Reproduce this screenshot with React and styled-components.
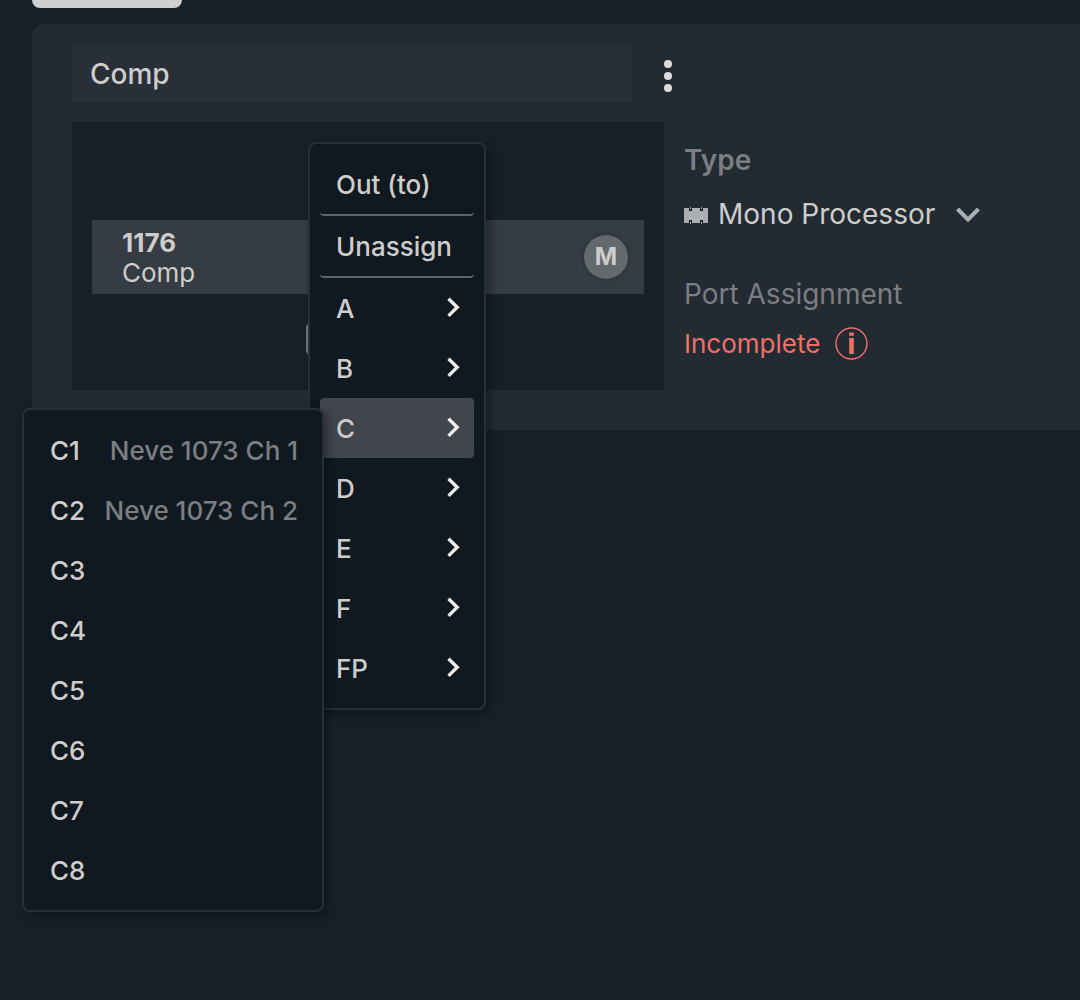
import React, { useState } from 'react';
import styled, { createGlobalStyle, css } from 'styled-components';

const GlobalStyle = createGlobalStyle`
  * {
    box-sizing: border-box;
  }

  body {
    margin: 0;
    background: #182027;
    color: #cecdcc;
    font-family: Inter, "Liberation Sans", sans-serif;
    font-size: 26px;
    line-height: 30px;
  }

  button, input, select {
    margin: 0;
    border: 0;
    color: inherit;
    font: inherit;
  }
`;

const Page = styled.main`
  min-height: 100vh;
  padding-left: 32px;
`;

const Tab = styled.button`
  display: block;
  width: 150px;
  height: 8px;
  padding: 0;
  background: #cfcfcf;
  border-radius: 0 0 8px 8px;
`;

const Panel = styled.section`
  margin-top: 16px;
  padding: 20px 40px 40px;
  background: #232b32;
  border-radius: 12px 0 0 0;
`;

const Header = styled.header`
  display: flex;
  align-items: center;
  gap: 18px;
  margin-bottom: 20px;
`;

const NameInput = styled.input`
  width: 560px;
  height: 58px;
  padding: 2px 18px 0;
  background: #292f37;
  font-size: 28px;
  font-weight: 500;
`;

const KebabButton = styled.button`
  display: flex;
  justify-content: center;
  width: 36px;
  padding: 6px 0 0;
  background: none;
`;

const Columns = styled.div`
  display: flex;
  gap: 20px;
`;

const Rack = styled.div`
  position: relative;
  display: flex;
  flex-direction: column;
  align-items: center;
  width: 592px;
  padding: 98px 20px 34px;
  background: #182027;
`;

const Unit = styled.div`
  display: flex;
  align-items: center;
  justify-content: space-between;
  width: 100%;
  margin-bottom: 28px;
  padding: 6px 16px 6px 30px;
  background: #363c43;
`;

const UnitText = styled.div`
  padding-top: 2px;
`;

const UnitName = styled.div`
  font-weight: ${(props) => (props.$bold ? 700 : 400)};
`;

const MuteButton = styled.button`
  width: 44px;
  height: 44px;
  padding: 0;
  background: #64696d;
  border-radius: 50%;
  box-shadow: 0 0 4px rgba(0, 0, 0, 0.3);
  font-size: 24px;
  font-weight: 700;
`;

const PortButton = styled.button`
  width: 124px;
  height: 34px;
  background: none;
  border: 2px solid #74797d;
  border-radius: 6px;
`;

const menuBox = css`
  position: absolute;
  margin: 0;
  padding: 10px;
  list-style: none;
  background: #111920;
  border: 2px solid #292f37;
  border-radius: 8px;
  box-shadow: 4px 4px 8px rgba(0, 0, 0, 0.35);
  font-weight: 500;
`;

const Menu = styled.ul`
  ${menuBox}
  top: 20px;
  left: 236px;
  width: 178px;
`;

const SubMenu = styled.ul`
  ${menuBox}
  top: 10px;
  right: 150px;
  width: 302px;
`;

const MenuRow = styled.li`
  position: relative;
`;

const MenuItem = styled.button`
  display: flex;
  align-items: center;
  justify-content: space-between;
  width: 100%;
  padding: 16px 14px 14px 16px;
  white-space: nowrap;
  background: ${(props) => (props.$active ? '#41464d' : 'transparent')};
  border-bottom: ${(props) => (props.$divider ? '2px solid #5f646b' : '0')};
  border-radius: 4px;
`;

const PortLabel = styled.span`
  color: #7b7e82;
`;

const Details = styled.div`
  padding-top: 23px;
  font-size: 28px;
`;

const DetailLabel = styled.label`
  display: block;
  color: #7b7e82;
  font-weight: ${(props) => (props.$bold ? 600 : 400)};
`;

const TypeField = styled.div`
  display: flex;
  align-items: center;
  gap: 10px;
  margin: 20px 0 46px;
`;

const TypeSelect = styled.select`
  height: 38px;
  padding: 0 10px 0 0;
  background: none;
  appearance: none;
`;

const Status = styled.div`
  display: flex;
  align-items: center;
  gap: 14px;
  margin-top: 18px;
  color: #ef6f69;
  font-size: 26px;
`;

const KebabIcon = () => (
  <svg width="8" height="32" viewBox="0 0 8 32" fill="#dcdddf">
    <circle cx="4" cy="4" r="4" />
    <circle cx="4" cy="16" r="4" />
    <circle cx="4" cy="28" r="4" />
  </svg>
);

const ProcessorIcon = () => (
  <svg width="24" height="20" viewBox="0 0 24 20">
    <rect y="4" width="24" height="15" rx="1" fill="#abafb2" />
    <path
      d="M5 3h3v4H5zM16 3h3v4h-3zM5 16h3v4H5zM16 16h3v4h-3z"
      fill="#11161b"
    />
    <path d="M6 3h1v2.5H6zM17 3h1v2.5h-1zM6 17.5h1V20H6zM17 17.5h1V20h-1z" fill="#abafb2" />
  </svg>
);

const ChevronDown = () => (
  <svg width="24" height="16" viewBox="0 0 24 16" fill="none">
    <path d="M1.5 3l10.5 10.5L22.5 3" stroke="#abafb2" strokeWidth="4" />
  </svg>
);

const ChevronRight = () => (
  <svg width="14" height="24" viewBox="0 0 14 24" fill="none">
    <path d="M2.5 1.7l8.7 8.6-8.7 8.6" stroke="#ececec" strokeWidth="3.4" />
  </svg>
);

const InfoIcon = () => (
  <svg width="34" height="34" viewBox="0 0 34 34" fill="none">
    <circle cx="17.5" cy="16.5" r="15.5" stroke="#ef6f69" strokeWidth="1.4" />
    <path d="M15.2 5.5h4.6v3.2h-4.6zM15.2 11h4.6v16h-4.6z" fill="#ef6f69" />
  </svg>
);

const banks = ['A', 'B', 'C', 'D', 'E', 'F', 'FP'];

const ports = [
  { id: 'C1', label: 'Neve 1073 Ch 1' },
  { id: 'C2', label: 'Neve 1073 Ch 2' },
  { id: 'C3' },
  { id: 'C4' },
  { id: 'C5' },
  { id: 'C6' },
  { id: 'C7' },
  { id: 'C8' },
];

const PortMenu = () => {
  const [openBank, setOpenBank] = useState('C');

  return (
    <Menu>
      <MenuRow>
        <MenuItem type="button" $divider>Out (to)</MenuItem>
      </MenuRow>
      <MenuRow>
        <MenuItem type="button" $divider>Unassign</MenuItem>
      </MenuRow>
      {banks.map((bank) => (
        <MenuRow key={bank}>
          <MenuItem
            type="button"
            $active={bank === openBank}
            onClick={() => setOpenBank(bank)}
          >
            {bank}
            <ChevronRight />
          </MenuItem>
          {bank === 'C' && openBank === 'C' && (
            <SubMenu>
              {ports.map((port) => (
                <li key={port.id}>
                  <MenuItem type="button">
                    {port.id}
                    {port.label && <PortLabel>{port.label}</PortLabel>}
                  </MenuItem>
                </li>
              ))}
            </SubMenu>
          )}
        </MenuRow>
      ))}
    </Menu>
  );
};

const App = () => {
  const [name, setName] = useState('Comp');

  return (
    <Page>
      <GlobalStyle />
      <Tab type="button" aria-label="Devices" />
      <Panel>
        <Header>
          <NameInput
            type="text"
            aria-label="Name"
            value={name}
            onChange={(event) => setName(event.target.value)}
          />
          <KebabButton type="button" aria-label="More options">
            <KebabIcon />
          </KebabButton>
        </Header>
        <Columns>
          <Rack>
            <Unit>
              <UnitText>
                <UnitName $bold>1176</UnitName>
                <UnitName>Comp</UnitName>
              </UnitText>
              <MuteButton type="button">M</MuteButton>
            </Unit>
            <PortButton type="button" aria-label="Output port" />
            <PortMenu />
          </Rack>
          <Details>
            <DetailLabel htmlFor="type" $bold>Type</DetailLabel>
            <TypeField>
              <ProcessorIcon />
              <TypeSelect id="type" defaultValue="mono">
                <option value="mono">Mono Processor</option>
              </TypeSelect>
              <ChevronDown />
            </TypeField>
            <DetailLabel as="div">Port Assignment</DetailLabel>
            <Status>
              Incomplete
              <InfoIcon />
            </Status>
          </Details>
        </Columns>
      </Panel>
    </Page>
  );
};

export default App;
